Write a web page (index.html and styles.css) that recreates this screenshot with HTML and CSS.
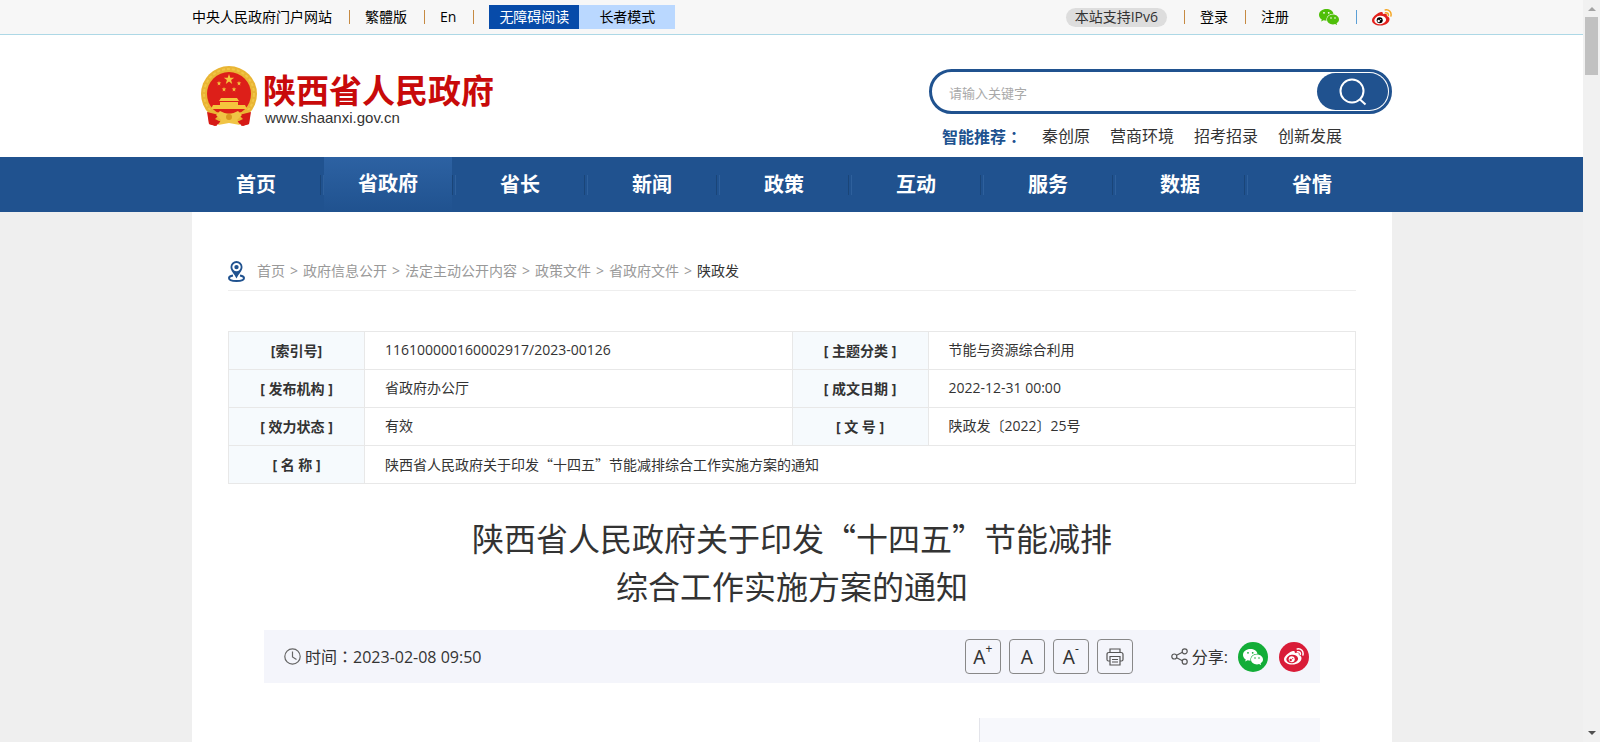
FILE: index.html
```html
<!DOCTYPE html>
<html lang="zh-CN">
<head>
<meta charset="utf-8">
<title>陕西省人民政府</title>
<link rel="stylesheet" href="styles.css">
</head>
<body>
<svg class="defs" aria-hidden="true">
  <symbol id="wechat" viewBox="0 0 20 16">
    <path fill="currentColor" d="M7.4 0C3.3 0 0 2.600 0 5.900c0 1.900 1.100 3.500 2.800 4.600L2.100 12.600l2.500-1.300c.9.300 1.900.4 2.900.4-.7-3.900 2.700-7 7-6.900C14 2 11 0 7.400 0z"/>
    <path fill="currentColor" d="M14 5.600c-3.400 0-6 2.200-6 4.900s2.600 4.900 6 4.900c.8 0 1.500-.1 2.100-.3l2 1-.5-1.800c1.400-.9 2.400-2.200 2.400-3.800 0-2.700-2.700-4.900-6-4.900z"/>
    <g fill="var(--eye)"><circle cx="5" cy="3.800" r=".9"/><circle cx="9.700" cy="3.800" r=".9"/><circle cx="12" cy="9" r=".8"/><circle cx="16" cy="9" r=".8"/></g>
  </symbol>
  <symbol id="weibo" viewBox="0 0 20 17">
    <path fill="var(--body)" d="M8.200 3.200c1.700-.7 3.200-.3 2.600 2 2.700-1.100 4.800-.3 4 1.900 1.700.5 2.700 1.500 2.700 3.100 0 3.300-4.200 6.300-9.200 6.300C3.700 16.500 0 14.400 0 11.200 0 8.500 4.200 4.500 8.200 3.200z"/>
    <ellipse cx="8.200" cy="11" rx="5.900" ry="4.200" fill="var(--face)" transform="rotate(-8 8.200 11)"/>
    <circle cx="7.700" cy="11.300" r="3" fill="var(--pupil)"/>
    <circle cx="6.700" cy="12" r="1.200" fill="var(--face)"/><circle cx="8.700" cy="10.600" r=".6" fill="var(--face)"/>
    <path fill="none" stroke="var(--wave)" stroke-width="1.500" stroke-linecap="round" d="M13.200.9c3.700-.7 6.700 2.400 5.700 6.100M13.500 3.700c1.900-.3 3.300 1.100 2.800 2.900"/>
  </symbol>
</svg>

<div class="topbar">
  <div class="wrap topbar-row">
    <nav class="top-left">
      <a href="#">中央人民政府门户网站</a><i class="sep"></i>
      <a href="#">繁體版</a><i class="sep"></i>
      <a href="#">En</a><i class="sep"></i>
      <span class="modes"><a class="mode barrier" href="#">无障碍阅读</a><a class="mode elder" href="#">长者模式</a></span>
    </nav>
    <nav class="top-right">
      <span class="pill">本站支持IPv6</span><i class="sep"></i>
      <a href="#">登录</a><i class="sep"></i>
      <a href="#">注册</a>
      <a class="top-wechat" href="#" aria-label="微信"><svg width="20" height="16"><use href="#wechat"/></svg></a><i class="sep blue"></i>
      <a class="top-weibo" href="#" aria-label="微博"><svg width="20" height="17"><use href="#weibo"/></svg></a>
    </nav>
  </div>
</div>

<header class="wrap header">
  <a class="logo" href="#">
    <svg class="emblem" width="58" height="61" viewBox="0 0 58 61" aria-hidden="true">
      <path fill="#d61a16" d="M8 43l7-2 14 8 14-8 7 2-1 15-6 2-5-3H20l-5 3-6-2z"/>
      <circle cx="29" cy="28" r="28" fill="#e9b534"/>
      <circle cx="29" cy="28" r="25" fill="none" stroke="#f1c546" stroke-width="2" stroke-dasharray="3 2"/>
      <circle cx="29" cy="28" r="22" fill="#dd1f19"/>
      <g fill="#f5c53d">
        <path d="M29 8l1.300 3.700h3.900l-3.100 2.400 1.100 3.800-3.200-2.300-3.200 2.300 1.100-3.800-3.100-2.400h3.900z"/>
        <path id="s" d="M19 15l.6 1.600h1.700l-1.400 1.100.5 1.700-1.400-1-1.400 1 .5-1.700-1.400-1.100h1.700z"/>
        <use href="#s" x="20"/><use href="#s" x="5" y="6"/><use href="#s" x="15" y="6"/>
        <path d="M21 32h16l2 3H19zM20 36h18v3H20zM13 39h32l2 4H11z"/>
      </g>
      <path fill="#e9b534" d="M7 43q22 9 44 0l-4 8-8 4H19l-8-4z"/>
      <path fill="#d61a16" d="M7 46l12 3-5 5 3 6-8-2zM51 46l-12 3 5 5-3 6 8-2z"/>
      <path fill="#f0c445" d="M20 45l9 4 9-4 4 4-5 5 3 5-11-2-11 2 3-5-5-5z"/>
      <circle cx="29" cy="51" r="3" fill="#d9971f"/>
    </svg>
    <span class="logo-text"><strong>陕西省人民政府</strong><span class="domain">www.shaanxi.gov.cn</span></span>
  </a>
  <div class="search-area">
    <form class="search">
      <input type="text" placeholder="请输入关键字" aria-label="请输入关键字">
      <button type="button" aria-label="搜索">
        <svg width="28" height="28" viewBox="0 0 28 28" fill="none" stroke="#fff" stroke-width="2"><circle cx="13" cy="13" r="11.500"/><path d="M20.500 21l6 5.500"/></svg>
      </button>
    </form>
    <div class="hot">
      <strong>智能推荐<span class="colon" lang="zh-Hant">：</span></strong>
      <a href="#">秦创原</a><a href="#">营商环境</a><a href="#">招考招录</a><a href="#">创新发展</a>
    </div>
  </div>
</header>

<nav class="mainnav">
  <ul class="wrap">
    <li><a href="#">首页</a></li>
    <li class="active"><a href="#">省政府</a></li>
    <li><a href="#">省长</a></li>
    <li><a href="#">新闻</a></li>
    <li><a href="#">政策</a></li>
    <li><a href="#">互动</a></li>
    <li><a href="#">服务</a></li>
    <li><a href="#">数据</a></li>
    <li><a href="#">省情</a></li>
  </ul>
</nav>

<main class="wrap content">
  <nav class="crumbs">
    <svg width="17" height="21" viewBox="0 0 17 21" aria-hidden="true">
      <path fill="none" stroke="#20528f" stroke-width="2" d="M5 14.500c-2.600.5-4 1.300-4 2.500 0 1.700 3 3 7.500 3s7.500-1.300 7.500-3c0-1.200-1.400-2-4-2.500"/>
      <path fill="#20528f" fill-rule="evenodd" d="M8.500 0a6 6 0 0 0-6 6c0 4 4 7 6 11.500 2-4.500 6-7.500 6-11.500a6 6 0 0 0-6-6zm0 1.900a4.200 4.200 0 1 1 0 8.400 4.200 4.200 0 0 1 0-8.400z"/>
      <circle cx="8.500" cy="6.100" r="2.200" fill="#20528f"/>
    </svg>
    <a href="#">首页</a><i>&gt;</i><a href="#">政府信息公开</a><i>&gt;</i><a href="#">法定主动公开内容</a><i>&gt;</i><a href="#">政策文件</a><i>&gt;</i><a href="#">省政府文件</a><i>&gt;</i><a class="current" href="#">陕政发</a>
  </nav>

  <table class="meta">
    <colgroup><col class="label-col"><col><col class="label-col"><col></colgroup>
    <tr><th scope="row">[索引号]</th><td>116100000160002917/2023-00126</td><th scope="row">[ 主题分类 ]</th><td>节能与资源综合利用</td></tr>
    <tr><th scope="row">[ 发布机构 ]</th><td>省政府办公厅</td><th scope="row">[ 成文日期 ]</th><td>2022-12-31 00:00</td></tr>
    <tr><th scope="row">[ 效力状态 ]</th><td>有效</td><th scope="row">[ 文 号 ]</th><td>陕政发〔2022〕25号</td></tr>
    <tr><th scope="row">[ 名 称 ]</th><td class="cjk" colspan="3">陕西省人民政府关于印发“十四五”节能减排综合工作实施方案的通知</td></tr>
  </table>

  <h1 class="cjk">陕西省人民政府关于印发“十四五”节能减排<br>综合工作实施方案的通知</h1>

  <div class="infobar">
    <svg width="17" height="17" viewBox="0 0 17 17" fill="none" stroke="#666" stroke-width="1.200" aria-hidden="true"><circle cx="8.500" cy="8.500" r="7.700"/><path d="M8.500 3.500v5.500l4 2.500"/></svg>
    <span class="time">时间<span class="colon" lang="zh-Hant">：</span>2023-02-08 09:50</span>
    <div class="tools">
      <button type="button" aria-label="放大字号">A<sup>+</sup></button>
      <button type="button">A</button>
      <button type="button" aria-label="缩小字号">A<sup>-</sup></button>
      <button type="button" aria-label="打印">
        <svg width="18" height="18" viewBox="0 0 18 18" fill="none" stroke="#555" stroke-width="1.200"><path d="M4 4.500V1h10v3.500M4 13H2.500Q1 13 1 11.500V6.500Q1 4.500 3 4.500h12q2 0 2 2v5q0 1.500-1.500 1.500H14M4 8.500h10V17H4zM6 11.500h6M6 14h6"/></svg>
      </button>
    </div>
    <div class="share">
      <svg width="17" height="17" viewBox="0 0 17 17" fill="none" stroke="#555" stroke-width="1.200" aria-hidden="true"><circle cx="3.300" cy="8.500" r="2.500"/><circle cx="13.700" cy="3.300" r="2.500"/><circle cx="13.700" cy="13.700" r="2.500"/><path d="M5.600 7.300l5.800-3M5.600 9.700l5.800 3"/></svg>
      <span>分享:</span>
      <a class="round green" href="#" aria-label="分享到微信"><svg width="20" height="16"><use href="#wechat"/></svg></a>
      <a class="round red" href="#" aria-label="分享到微博"><svg width="20" height="17"><use href="#weibo"/></svg></a>
    </div>
  </div>
  <aside class="side"></aside>
</main>

<div class="scrollbar" aria-hidden="true">
  <i class="arrow up"></i><i class="thumb"></i><i class="arrow down"></i>
</div>
</body>
</html>
```
FILE: styles.css
```css
* { box-sizing: border-box; }
body {
  display: flex;
  flex-direction: column;
  min-height: 100vh;
  margin: 0;
  padding-right: 16px;
  background: #efefef;
  color: #333;
  font: 14px/20px "Open Sans", "Noto Sans CJK SC", sans-serif;
}
a { color: inherit; text-decoration: none; }
i { font-style: normal; }
svg { display: block; flex: none; }
.defs { display: none; }
.wrap { width: 100%; max-width: 1200px; margin: 0 auto; }
.cjk { font-family: "Noto Sans CJK SC", sans-serif; }
.colon { font-family: "Noto Sans CJK TC", sans-serif; }

.topbar { background: #f7f7f7; border-bottom: 1px solid #add8e6; color: #000; }
.topbar-row { display: flex; justify-content: space-between; height: 34px; }
.top-left, .top-right { display: flex; align-items: center; }
.sep { width: 1px; height: 14px; margin: 0 15px 0 17px; background: #c68a42; }
.sep.blue { background: #5b9fd6; }
.modes { display: flex; }
.mode { line-height: 24px; text-align: center; }
.barrier { width: 90px; background: #074ba9; color: #fff; }
.elder { width: 96px; background: #bad8ff; }
.pill { padding: 0 9px 1px; border-radius: 10px; background: #ddd; color: #333; line-height: 18px; }
.top-wechat { margin-left: 30px; color: #4fbf09; --eye: #fff; }
.top-weibo { --body: #e2211c; --face: #fff; --pupil: #000; --wave: #f5a623; }

.header {
  display: flex;
  justify-content: space-between;
  height: 122px;
  padding: 31px 0 0 8px;
  background: #fff;
  box-shadow: 0 0 0 100vmax #fff;
  clip-path: inset(0 -100vmax);
}
.logo { display: flex; align-items: flex-start; gap: 5px; }
.logo-text { display: flex; flex-direction: column; padding-top: 4px; }
.logo strong { color: #c80a0a; font: 700 33px/38px "Noto Sans CJK SC", sans-serif; }
.domain { padding-left: 2px; font: 15px/20px "Liberation Sans", sans-serif; }
.search-area { width: 463px; padding-top: 3px; }
.search { display: flex; height: 45px; padding: 1px 0 1px 17px; border: 3px solid #20528f; border-radius: 23px; }
.search input { flex: 1; min-width: 0; padding: 2px 0 0; border: 0; outline: 0; background: none; font: 13px/20px "Noto Sans CJK SC", sans-serif; }
.search input::placeholder { color: #a9a9a9; }
.search button { display: flex; align-items: center; justify-content: center; width: 71px; margin-right: 1px; padding: 0; border: 0; border-radius: 19px; background: #20528f; }
.hot { display: flex; gap: 20px; padding: 10px 0 0 13px; font-size: 16px; line-height: 24px; }
.hot strong { color: #20528f; }

.mainnav { background: #20528f; }
.mainnav ul { display: flex; height: 55px; padding: 0; list-style: none; }
.mainnav li { display: flex; flex: 0 0 132px; align-items: center; }
.mainnav li::after { content: ""; width: 2px; height: 20px; border-left: 1px solid #1a4578; border-right: 1px solid #2e609c; }
.mainnav li:last-child::after { visibility: hidden; }
.mainnav a { flex: 1; color: #fff; font-size: 20px; font-weight: 700; line-height: 55px; text-align: center; }
.mainnav .active a { margin-top: -1px; padding-bottom: 1px; background: linear-gradient(#2d62a3, #20528f); }

.content { display: flex; flex: 1; flex-direction: column; padding: 48px 36px 0; background: #fff; }
.crumbs { display: flex; align-items: center; height: 31px; padding-bottom: 8px; border-bottom: 1px solid #eee; color: #999; }
.crumbs svg { margin-right: 12px; }
.crumbs i { width: 18px; text-align: center; }
.crumbs .current { color: #333; }

.meta { width: 100%; margin-top: 40px; border-collapse: collapse; table-layout: fixed; }
.label-col { width: 136px; }
.meta th, .meta td { height: 38px; border: 1px solid #e8e8e8; line-height: 20px; }
.meta th { padding: 0; background: #f6fafd; text-align: center; }
.meta td { padding: 0 20px 2px; }

h1 { margin: 29px 0 21px; font-size: 32px; font-weight: 400; line-height: 48px; text-align: center; }

.infobar { display: flex; align-items: center; height: 53px; margin: 0 36px; padding: 0 11px 0 20px; background: #f4f5fb; font-size: 16px; }
.time { margin-left: 4px; }
.tools { display: flex; gap: 8px; margin-left: auto; }
.tools button { display: flex; align-items: center; justify-content: center; width: 36px; height: 35px; padding: 0; border: 1px solid #888; border-radius: 4px; background: none; color: #333; font: 19px/20px "Noto Sans", sans-serif; }
.tools sup { align-self: flex-start; font-size: 12px; line-height: 18px; }
.share { display: flex; align-items: center; margin-left: 38px; }
.share span { margin: 0 10px 0 4px; }
.round { display: flex; align-items: center; justify-content: center; width: 30px; height: 30px; border-radius: 50%; color: #fff; }
.green { margin-right: 11px; background: #13ad38; --eye: #13ad38; }
.red { background: #d91c38; --body: #fff; --face: #d91c38; --pupil: #fff; --wave: #fff; }
.side { flex: 1; width: 341px; margin: 35px 36px 0 auto; border-left: 1px solid #e3e4ea; background: #f7f8fc; }

.scrollbar { position: fixed; top: 0; right: 0; bottom: 0; display: flex; flex-direction: column; align-items: center; width: 17px; padding: 7px 0; background: #f1f1f1; }
.arrow { border: 4px solid transparent; }
.up { border-top: 0; border-bottom-color: #a3a3a3; }
.down { margin-top: auto; border-bottom: 0; border-top-color: #505050; }
.thumb { width: 13px; height: 58px; margin-top: 6px; background: #c1c1c1; }
```
